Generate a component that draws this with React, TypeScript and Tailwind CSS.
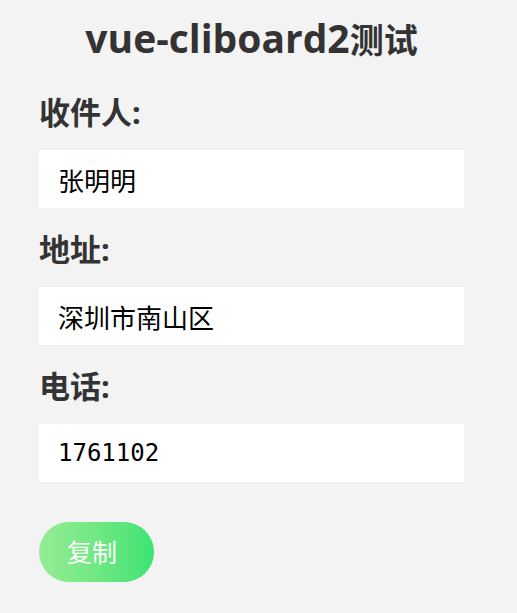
import React from "react";

const fields = [
  { label: "收件人:", value: "张明明", mono: false },
  { label: "地址:", value: "深圳市南山区", mono: false },
  { label: "电话:", value: "1761102", mono: true },
];

function App() {
  return (
    <div className="min-h-screen bg-[#f3f3f3] pt-[18px] font-['Noto_Sans','Noto_Sans_CJK_SC',sans-serif] text-[#333]">
      <div className="ml-[39px] w-[425px]">
        <h1 className="flex h-[44px] items-baseline justify-center font-bold">
          <span className="text-[39px] leading-none font-['Open_Sans','Noto_Sans_CJK_SC',sans-serif]">vue-cliboard2</span>
          <span className="text-[34px] leading-none font-['Noto_Sans_CJK_SC',sans-serif]">测试</span>
        </h1>

        <div className="mt-[30px] flex flex-col gap-[21px]">
          {fields.map((f) => (
            <div key={f.label}>
              <div className="text-[31px] leading-[40px] font-bold">{f.label}</div>
              <input
                readOnly
                value={f.value}
                className={
                  f.mono
                    ? "mt-[18px] block h-[58px] w-full bg-white px-[19px] text-[24px] text-black outline-none font-['DejaVu_Sans_Mono',monospace]"
                    : "mt-[18px] block h-[58px] w-full bg-white px-[19px] text-[26px] text-black outline-none font-['Noto_Sans_CJK_SC',sans-serif]"
                }
              />
            </div>
          ))}
        </div>

        <button className="mt-[40px] h-[60px] w-[115px] rounded-full bg-gradient-to-r from-[#94ed93] to-[#3ae374] pr-[9px] text-[25px] text-white font-['Noto_Sans_CJK_SC',sans-serif]">
          复制
        </button>
      </div>
    </div>
  );
}

export default App;
